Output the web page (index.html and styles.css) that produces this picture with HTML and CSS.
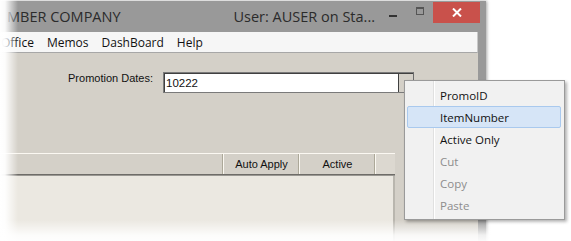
FILE: index.html
```html
<!DOCTYPE html>
<html>
<head>
<meta charset="utf-8">
<link rel="stylesheet" href="styles.css">
</head>
<body>
<div class="stage">
  <div class="window">
    <div class="titlebar">
      <span class="title">MBER COMPANY</span>
      <span class="user">User: AUSER on Sta...</span>
      <div class="caption">
        <div class="cap-btn"><span class="min-glyph"></span></div>
        <div class="cap-btn"><span class="max-glyph"></span></div>
        <div class="cap-btn cap-close">
          <svg width="10" height="9" viewBox="0 0 10 9"><path d="M1 0.5 L9 8.5 M9 0.5 L1 8.5" stroke="#fff" stroke-width="2"/></svg>
        </div>
      </div>
    </div>
    <div class="client">
      <div class="menubar">
        <span class="menu-item first">Office</span>
        <span class="menu-item">Memos</span>
        <span class="menu-item">DashBoard</span>
        <span class="menu-item">Help</span>
      </div>
      <div class="content">
        <div class="field-row">
          <label class="field-label">Promotion Dates:</label>
          <div class="field-input">
            <span class="field-value">10222</span>
            <span class="field-btn"></span>
          </div>
        </div>
        <div class="grid">
          <div class="grid-header">
            <div class="hcell col-main"></div>
            <div class="hcell col-w">Auto Apply</div>
            <div class="hcell col-w">Active</div>
            <div class="hcell col-fill"></div>
          </div>
          <div class="grid-body"></div>
        </div>
      </div>
    </div>
  </div>

  <div class="ctx-menu">
    <div class="ctx-item">PromoID</div>
    <div class="ctx-item active">ItemNumber</div>
    <div class="ctx-item">Active Only</div>
    <div class="ctx-item disabled">Cut</div>
    <div class="ctx-item disabled">Copy</div>
    <div class="ctx-item disabled">Paste</div>
  </div>

  <div class="fade-left"></div>
  <div class="fade-bottom"></div>
</div>
</body>
</html>
```

FILE: styles.css
```css
html, body {
  margin: 0;
  padding: 0;
  background: #fff;
}

.stage {
  position: relative;
  width: 571px;
  height: 241px;
  overflow: hidden;
  background: #fff;
}

.window {
  width: 486px;
  height: 270px;
  margin-top: 1px;
  background: #999999;
  box-shadow: 1px 0 3px rgba(0, 0, 0, 0.35);
  display: flex;
  flex-direction: column;
}

.titlebar {
  height: 31px;
  display: flex;
  align-items: center;
  padding: 0 6px 0 7px;
  font-family: "Open Sans", "Noto Sans", sans-serif;
  font-size: 14.5px;
  color: #2b2b2b;
}

.user {
  margin-left: auto;
  margin-right: 4px;
}

.caption {
  display: flex;
  align-self: flex-start;
  margin-top: 1px;
}

.cap-btn {
  width: 27px;
  height: 21px;
  display: flex;
  align-items: center;
  justify-content: center;
}

.cap-close {
  width: 47px;
  background: #c9514b;
}

.min-glyph {
  width: 8px;
  height: 2px;
  background: #333;
  margin-top: 7px;
}

.max-glyph {
  width: 6px;
  height: 5px;
  border: 1px solid #555;
  border-top-width: 2px;
  margin-top: -3px;
}

.client {
  margin-right: 8px;
  flex: 1;
  display: flex;
  flex-direction: column;
}

.menubar {
  height: 20px;
  background: #f6f6f6;
  border-bottom: 1px solid #a7a7a7;
  border-right: 1px solid #c8c8c8;
  display: flex;
  align-items: center;
  gap: 13px;
  font-family: "Open Sans", "Noto Sans", sans-serif;
  font-size: 12px;
  color: #111;
}

.menu-item.first {
  margin-left: 1px;
}

.content {
  flex: 1;
  background: #d4d0c8;
  padding-top: 19px;
  font-family: "Liberation Sans", Arial, sans-serif;
  font-size: 11px;
  color: #111;
}

.field-row {
  display: flex;
  align-items: flex-start;
  padding-left: 65px;
}

.field-label {
  width: 88px;
  text-align: right;
  margin-right: 10px;
  line-height: 13px;
}

.field-input {
  box-sizing: border-box;
  width: 251px;
  height: 21px;
  background: #fff;
  border: 1px solid #7a7a7a;
  border-right-color: #6a6a6a;
  box-shadow: inset 1px 1px 0 #404040;
  display: flex;
  align-items: center;
}

.field-value {
  padding-left: 2px;
  flex: 1;
  font-size: 11.5px;
  margin-top: 1px;
}

.field-btn {
  box-sizing: border-box;
  width: 15px;
  height: 100%;
  background: #d4d0c8;
  border: 1px solid #404040;
  border-right: none;
  border-bottom: none;
}

.grid {
  margin-top: 60px;
  width: 395px;
}

.grid-header {
  display: flex;
  height: 20px;
  border-top: 1px solid #fbf8f2;
  border-bottom: 1px solid #6e6c68;
  box-shadow: 0 1px 0 #9a9893;
  background: #d4d0c8;
}

.hcell {
  box-sizing: border-box;
  height: 100%;
  display: flex;
  align-items: center;
  justify-content: center;
  border-left: 1px solid #fbf8f2;
  box-shadow: inset -1px 0 0 #aca899;
}

.col-main {
  width: 223px;
  border-left: none;
}

.col-w {
  width: 76px;
}

.col-fill {
  width: 20px;
  background: #dcd8d0;
  box-shadow: none;
}

.grid-body {
  margin-top: 1px;
  height: 80px;
  background: #ebe8e1;
  border-right: 2px solid #b9b6ae;
}

.ctx-menu {
  position: absolute;
  left: 404px;
  top: 80px;
  width: 161px;
  height: 140px;
  box-sizing: border-box;
  border: 1px solid #9a9a9a;
  padding: 3px 3px 3px 2px;
  background: linear-gradient(to right, #f1f1f1 28px, #e0e0e0 28px, #e0e0e0 29px, #ffffff 29px, #ffffff 30px, #f1f1f1 30px);
  box-shadow: 2px 2px 3px rgba(0, 0, 0, 0.3);
  font-family: "Open Sans", "Noto Sans", sans-serif;
  font-size: 11.5px;
  color: #111;
}

.ctx-item {
  box-sizing: border-box;
  height: 22px;
  display: flex;
  align-items: center;
  padding-left: 32px;
  border: 1px solid transparent;
}

.ctx-item.active {
  background: #d6e5f7;
  border-color: #a9c9ee;
  border-radius: 2px;
}

.ctx-item.disabled {
  color: #8d8d8d;
}

.fade-left {
  position: absolute;
  left: 0;
  top: 0;
  width: 18px;
  height: 241px;
  background: linear-gradient(to right, rgba(255,255,255,1) 0, rgba(255,255,255,0.95) 5px, rgba(255,255,255,0) 18px);
}

.fade-bottom {
  position: absolute;
  left: 0;
  top: 220px;
  width: 571px;
  height: 21px;
  background: linear-gradient(to bottom, rgba(255,255,255,0) 0, rgba(255,255,255,0.85) 15px, rgba(255,255,255,0.95) 21px);
}
```
